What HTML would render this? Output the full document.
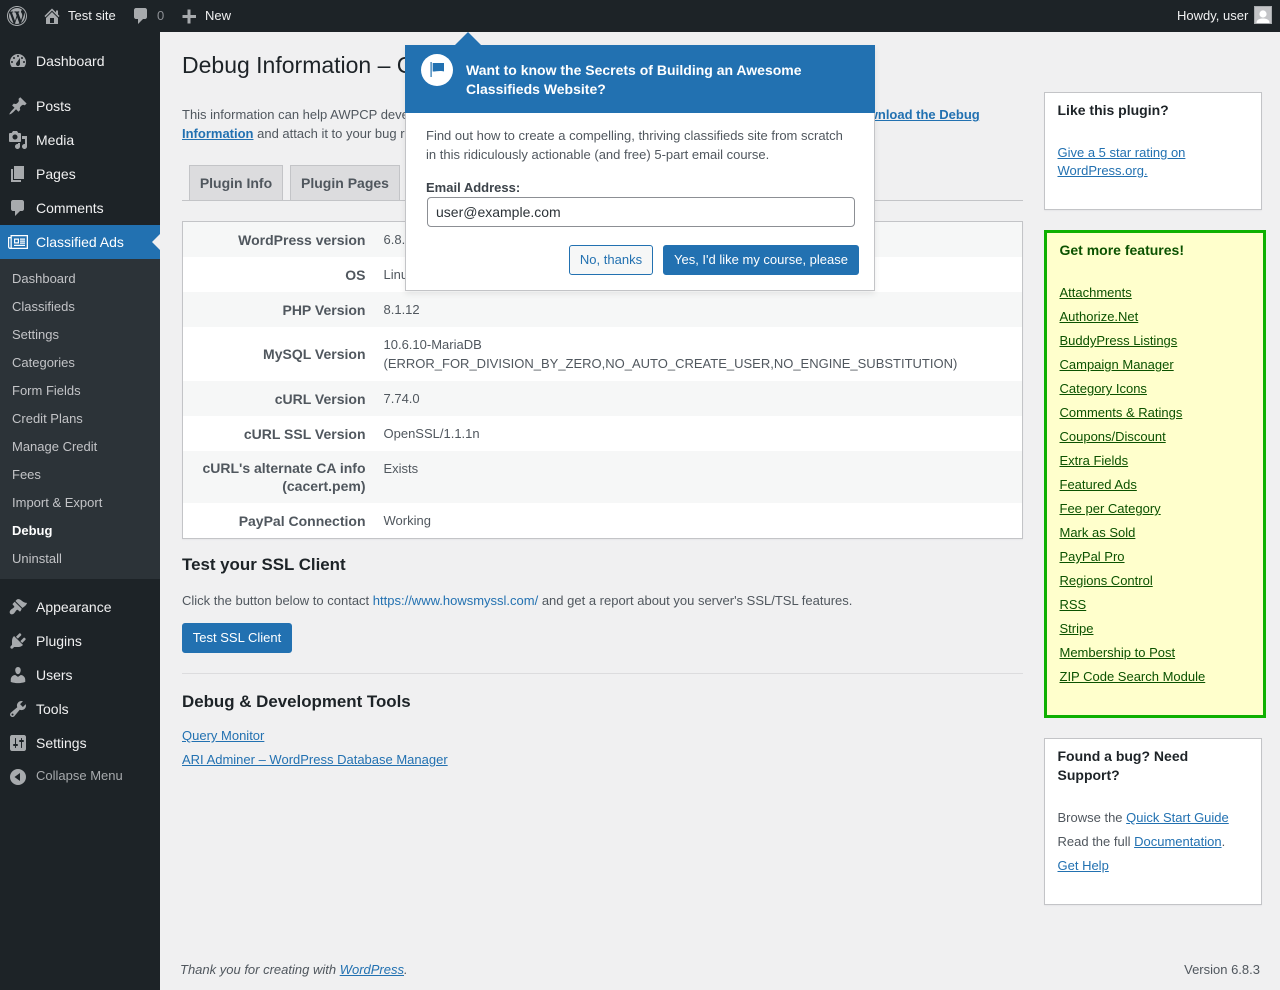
<!DOCTYPE html>
<html lang="en"><head><meta charset="utf-8"><title>Debug Information</title>
<style>
html,body{margin:0;padding:0;width:1280px;height:990px;overflow:hidden;background:#f0f0f1;font-family:"Liberation Sans",sans-serif;font-size:13px;color:#3c434a}
.a{position:absolute;white-space:nowrap}
a{color:#2271b1;text-decoration:underline}
#bar{position:absolute;left:0;top:0;width:1280px;height:32px;background:#1d2327}
#bar .a{line-height:32px;color:#f0f0f1;font-size:13px}
#side{position:absolute;left:0;top:32px;width:160px;height:958px;background:#1d2327}
svg{position:absolute;display:block}
.ic{width:20px;height:20px;fill:#a7aaad;left:8px}
.m{left:36px;font-size:14px;line-height:18px;color:#f0f0f1}
.s{left:12px;font-size:13px;line-height:18px;color:#c3c4c7}
.tr{position:absolute;left:183px;width:839px}
.th{position:absolute;text-align:right;font-size:14px;font-weight:bold;line-height:18px;color:#50575e;white-space:nowrap}
.td{position:absolute;left:383.5px;font-size:13px;line-height:19px;color:#50575e;white-space:nowrap}
.tab{position:absolute;top:165px;height:35px;background:#dcdcde;border:1px solid #c3c4c7;border-bottom:0;box-sizing:border-box;font-size:14px;font-weight:bold;color:#50575e;line-height:35px;text-align:center}
.box{position:absolute;box-sizing:border-box;background:#fff;border:1px solid #c3c4c7;box-shadow:0 1px 1px rgba(0,0,0,.04)}
.g{left:1059.5px;font-size:13px;line-height:18px;color:#0b5200}
.g a{color:#0b5200}
.btn{position:absolute;box-sizing:border-box;border-radius:3px;font-size:13px;text-align:center;height:30px;line-height:28px;border:1px solid #2271b1}
.p{color:#50575e;font-size:13px;line-height:18px}
</style></head><body>

<div id="side"></div>
<div class="a" style="left:0;top:225px;width:160px;height:34px;background:#2271b1"></div>
<div class="a" style="left:0;top:259px;width:160px;height:320px;background:#2c3338"></div>
<div class="a" style="left:152px;top:234px;width:0;height:0;border:8px solid transparent;border-left:0;border-right-color:#f0f0f1"></div>

<div id="bar">
<svg viewBox="0 0 20 20" style="left:7px;top:6px;width:20px;height:20px;fill:#a7aaad"><path d="M20 10c0-5.52-4.48-10-10-10S0 4.48 0 10s4.48 10 10 10 10-4.48 10-10zM10 1.01c4.96 0 8.99 4.03 8.99 8.99s-4.03 8.99-8.99 8.99S1.01 14.96 1.01 10 5.04 1.01 10 1.01zM8.010 14.820L4.960 6.610c.49-.03 1.05-.08 1.05-.08.43-.05.38-1.010-.06-.99 0 0-1.290.1-2.130.1-.15 0-.33 0-.52-.01 1.440-2.170 3.900-3.600 6.700-3.600 2.090 0 3.990.79 5.410 2.090-.6-.08-1.450.35-1.450 1.420 0 .66.38 1.220.79 1.880.31.54.5 1.220.5 2.210 0 1.340-1.270 4.480-1.270 4.480l-2.710-7.500c.48-.03.75-.16.75-.16.43-.05.38-1.100-.05-1.080 0 0-1.300.11-2.140.11-.78 0-2.110-.11-2.110-.11-.43-.02-.48 1.060-.05 1.080l.84.08 1.120 3.040zm6.020 2.150L16.640 10s.67-1.690.39-3.810c.63 1.140.94 2.420.94 3.810 0 2.960-1.560 5.580-3.940 6.970zM2.680 6.770L6.500 17.250c-2.670-1.300-4.470-4.080-4.470-7.250 0-1.160.2-2.230.65-3.230zm7.450 4.530l2.290 6.250c-.75.27-1.570.42-2.420.42-.72 0-1.410-.11-2.060-.3z"/></svg>
<svg viewBox="0 0 20 20" style="left:42px;top:6px;width:20px;height:20px;fill:#a7aaad"><path d="M16 8.500l1.530 1.530-1.060 1.060L10 4.620l-6.470 6.470-1.060-1.060L10 2.500l4 4v-2h2v4zm-6-2.460l6 5.990V18H4v-5.970zM12 17v-5H8v5h4z"/></svg>
<div class="a" style="left:68px;top:0">Test site</div>
<svg viewBox="0 0 20 20" style="left:131px;top:6px;width:20px;height:20px;fill:#a7aaad"><path d="M5 2h9c1.100 0 2 .9 2 2v7c0 1.100-.9 2-2 2h-2l-5 5v-5H5c-1.100 0-2-.9-2-2V4c0-1.100.9-2 2-2z"/></svg>
<div class="a" style="left:157px;top:0;color:#8c8f94">0</div>
<svg viewBox="0 0 20 20" style="left:179px;top:6px;width:20px;height:20px;fill:#a7aaad"><path d="M17 9v3h-5.500v5.500h-3V12H3.500V9h5V3.500h3V9z"/></svg>
<div class="a" style="left:205px;top:0">New</div>
<div class="a" style="left:1177px;top:0">Howdy, user</div>
<div class="a" style="left:1254px;top:6px;width:16px;height:16px;border:1px solid #a7aaad;background:#c3c4c7;overflow:hidden">
<svg viewBox="0 0 16 16" style="left:0;top:0;width:16px;height:16px;fill:#fff"><circle cx="8" cy="7" r="3.600"/><path d="M1.500 16c0-3.500 3-4.500 6.500-4.500s6.500 1 6.500 4.500z"/></svg></div>
</div>

<svg class="ic" viewBox="0 0 20 20" style="top:51px"><path fill-rule="evenodd" d="M3.760 16h12.480c1.100-1.370 1.760-3.110 1.760-5 0-4.420-3.580-8-8-8s-8 3.580-8 8c0 1.890.66 3.630 1.760 5zM10 4c.55 0 1 .45 1 1s-.45 1-1 1-1-.45-1-1 .45-1 1-1zM6 6c.55 0 1 .45 1 1s-.45 1-1 1-1-.45-1-1 .45-1 1-1zm8 0c.55 0 1 .45 1 1s-.45 1-1 1-1-.45-1-1 .45-1 1-1zm-5.370 5.550L12 7v6c0 1.100-.9 2-2 2s-2-.9-2-2c0-.57.24-1.080.63-1.450zM4 10c.55 0 1 .45 1 1s-.45 1-1 1-1-.45-1-1 .45-1 1-1zm12 0c.55 0 1 .45 1 1s-.45 1-1 1-1-.45-1-1 .45-1 1-1z"/></svg>
<div class="a m" style="top:52px">Dashboard</div>
<svg class="ic" viewBox="0 0 20 20" style="top:96px"><path d="M10.440 3.020l1.820-1.820 6.360 6.350-1.830 1.820c-1.050-.68-2.480-.57-3.410.36l-.75.75c-.92.93-1.040 2.350-.35 3.410l-1.830 1.820-2.410-2.410-2.800 2.790c-.42.42-3.380 2.710-3.800 2.290s1.860-3.390 2.280-3.810l2.790-2.790L4.100 9.360l1.830-1.820c1.050.69 2.480.57 3.400-.36l.75-.75c.93-.92 1.050-2.350.36-3.410z"/></svg>
<div class="a m" style="top:97px">Posts</div>
<svg class="ic" viewBox="0 0 20 20" style="top:130px"><path d="M13 11V4c0-.55-.45-1-1-1h-1.670L9 1H5L3.670 3H2c-.55 0-1 .45-1 1v7c0 .55.45 1 1 1h10c.55 0 1-.45 1-1zM7 4.500c1.380 0 2.500 1.120 2.500 2.500S8.380 9.500 7 9.500 4.500 8.380 4.500 7 5.620 4.500 7 4.500zM14 6h5v10.500c0 1.380-1.120 2.500-2.500 2.500S14 17.880 14 16.500s1.120-2.500 2.500-2.500c.17 0 .34.02.5.05V9h-3V6zm-4 8.050V13h2v3.500c0 1.380-1.120 2.500-2.500 2.500S7 17.880 7 16.500 8.120 14 9.500 14c.17 0 .34.02.5.05z"/></svg>
<div class="a m" style="top:131px">Media</div>
<svg class="ic" viewBox="0 0 20 20" style="top:164px"><path d="M6 15V2h10v13H6zm-1 1h8v2H3V5h2v11z"/></svg>
<div class="a m" style="top:165px">Pages</div>
<svg class="ic" viewBox="0 0 20 20" style="top:198px"><path d="M5 2h9c1.100 0 2 .9 2 2v7c0 1.100-.9 2-2 2h-2l-5 5v-5H5c-1.100 0-2-.9-2-2V4c0-1.100.9-2 2-2z"/></svg>
<div class="a m" style="top:199px">Comments</div>
<svg viewBox="0 0 20 14" style="left:8px;top:235px;width:20px;height:14px;fill:#fff"><path fill-rule="evenodd" d="M2.500 0H20V14H2.500C1 14 0 13 0 11.500V2H2.500zM1.200 3.200V11.500c0 .7.4 1.300 1.300 1.300V3.200zM3.800 1.300V12.700H18.700V1.300z"/><path fill-rule="evenodd" d="M6 3.500h5V8.500H6zM7.200 4.700V7.300H9.800V4.700z"/><path d="M12 3.500h5v1.200h-5zM12 5.500h5v1.200h-5zM12 7.500h5v1.200h-5zM6 9.800h11V11H6z"/></svg>
<div class="a m" style="top:233px;color:#fff">Classified Ads</div>

<div class="a s" style="top:270px">Dashboard</div>
<div class="a s" style="top:298px">Classifieds</div>
<div class="a s" style="top:326px">Settings</div>
<div class="a s" style="top:354px">Categories</div>
<div class="a s" style="top:382px">Form Fields</div>
<div class="a s" style="top:410px">Credit Plans</div>
<div class="a s" style="top:438px">Manage Credit</div>
<div class="a s" style="top:466px">Fees</div>
<div class="a s" style="top:494px">Import &amp; Export</div>
<div class="a s" style="top:522px;color:#fff;font-weight:bold">Debug</div>
<div class="a s" style="top:550px">Uninstall</div>

<svg class="ic" viewBox="0 0 20 20" style="top:597px"><path d="M14.480 11.060L7.410 3.990l1.500-1.500c.5-.56 2.300-.47 3.510.32 1.210.8 1.430 1.280 2.910 2.100 1.180.64 2.450 1.260 3.670.85-.1 1.100-.9 2.200-1.800 3.100zm-.71.71L6.700 4.700 4.930 6.470c-.39.39-.39 1.020 0 1.410l1.060 1.060c.39.39.39 1.030 0 1.420-.6.6-1.430 1.110-2.210 1.690-.35.26-.7.53-1.010.84-1.350 1.340-1.380 2.890-.45 3.820.93.93 2.480.9 3.820-.45.31-.31.58-.66.84-1.010.58-.78 1.090-1.610 1.690-2.210.39-.39 1.030-.39 1.420 0l1.060 1.060c.39.39 1.020.39 1.410 0z"/></svg>
<div class="a m" style="top:598px">Appearance</div>
<svg class="ic" viewBox="0 0 20 20" style="top:631px"><path d="M13.110 4.360L9.870 7.600 8 5.730l3.240-3.240c.35-.34 1.050-.2 1.560.32.52.51.66 1.210.31 1.550zm-8 1.770l.91-1.120 9.010 9.010-1.190.84c-.71.71-2.630 1.160-3.820 1.160H6.140L4.900 17.260c-.59.59-1.540.59-2.120 0-.59-.58-.59-1.530 0-2.120l1.240-1.240v-3.880c0-1.130.4-3.190 1.090-3.890zm7.260 3.970l3.240-3.240c.34-.35 1.040-.21 1.550.31.52.51.66 1.210.31 1.550l-3.240 3.250z"/></svg>
<div class="a m" style="top:632px">Plugins</div>
<svg class="ic" viewBox="0 0 20 20" style="top:665px"><path d="M10 9.250c-2.270 0-2.730-3.440-2.730-3.440C7 4.020 7.820 2 9.970 2c2.160 0 2.980 2.020 2.710 3.810 0 0-.41 3.440-2.680 3.440zm0 2.570L12.720 10c2.390 0 4.520 2.330 4.520 4.530v2.490s-3.650 1.130-7.240 1.130c-3.650 0-7.240-1.130-7.240-1.130v-2.490c0-2.250 1.940-4.480 4.470-4.480z"/></svg>
<div class="a m" style="top:666px">Users</div>
<svg class="ic" viewBox="0 0 20 20" style="top:699px"><path d="M16.680 9.770c-1.340 1.340-3.300 1.670-4.950.99l-5.410 6.520c-.99.99-2.590.99-3.580 0s-.99-2.590 0-3.570l6.520-5.420c-.68-1.650-.35-3.610.99-4.950 1.280-1.280 3.120-1.620 4.720-1.060l-2.890 2.890 2.820 2.820 2.860-2.870c.53 1.580.18 3.390-1.080 4.650zM3.810 16.210c.4.39 1.040.39 1.430 0 .4-.4.4-1.040 0-1.430-.39-.4-1.030-.4-1.430 0-.39.39-.39 1.030 0 1.430z"/></svg>
<div class="a m" style="top:700px">Tools</div>
<svg class="ic" viewBox="0 0 20 20" style="top:733px"><path fill-rule="evenodd" d="M18 16V4c0-1.100-.9-2-2-2H4c-1.100 0-2 .9-2 2v12c0 1.100.9 2 2 2h12c1.100 0 2-.9 2-2zM8 11h1c.55 0 1 .45 1 1s-.45 1-1 1H8v1.500c0 .28-.22.5-.5.5s-.5-.22-.5-.5V13H6c-.55 0-1-.45-1-1s.45-1 1-1h1V5.500c0-.28.22-.5.5-.5s.5.22.5.5V11zm5-2h-1c-.55 0-1-.45-1-1s.45-1 1-1h1V5.500c0-.28.22-.5.5-.5s.5.22.5.5V7h1c.55 0 1 .45 1 1s-.45 1-1 1h-1v5.500c0 .28-.22.5-.5.5s-.5-.22-.5-.5V9z"/></svg>
<div class="a m" style="top:734px">Settings</div>
<svg class="ic" viewBox="0 0 20 20" style="top:767px"><path fill-rule="evenodd" d="M10 2a8 8 0 1 0 0 16 8 8 0 0 0 0-16zM12 6v8L6.500 10z"/></svg>
<div class="a" style="left:36px;top:767px;font-size:13px;line-height:18px;color:#a7aaad">Collapse Menu</div>

<div class="a" style="left:182px;top:49px;font-size:23px;line-height:32px;color:#1d2327">Debug Information – Classifieds</div>
<div class="a p" style="left:182px;top:106px">This information can help AWPCP developers to debug possible problems. If you are submitting a bug report please <a href="#" style="font-weight:bold">Download the Debug</a></div>
<div class="a p" style="left:182px;top:125px"><a href="#" style="font-weight:bold">Information</a> and attach it to your bug report.</div>

<div class="a" style="left:182px;top:200px;width:841px;height:1px;background:#c3c4c7"></div>
<div class="tab" style="left:189px;width:94px">Plugin Info</div>
<div class="tab" style="left:290px;width:110px">Plugin Pages</div>

<div class="box" style="left:182px;top:221px;width:841px;height:318px"></div>
<div class="tr" style="top:222px;height:35px;background:#f6f7f7"></div>
<div class="tr" style="top:292px;height:35px;background:#f6f7f7"></div>
<div class="tr" style="top:381px;height:35px;background:#f6f7f7"></div>
<div class="tr" style="top:451px;height:52px;background:#f6f7f7"></div>
<div class="th" style="right:914.5px;top:231px">WordPress version</div><div class="td" style="top:230px">6.8.3</div>
<div class="th" style="right:914.5px;top:266px">OS</div><div class="td" style="top:265px">Linux</div>
<div class="th" style="right:914.5px;top:301px">PHP Version</div><div class="td" style="top:300px">8.1.12</div>
<div class="th" style="right:914.5px;top:345px">MySQL Version</div><div class="td" style="top:335px">10.6.10-MariaDB<br>(ERROR_FOR_DIVISION_BY_ZERO,NO_AUTO_CREATE_USER,NO_ENGINE_SUBSTITUTION)</div>
<div class="th" style="right:914.5px;top:390px">cURL Version</div><div class="td" style="top:389px">7.74.0</div>
<div class="th" style="right:914.5px;top:425px">cURL SSL Version</div><div class="td" style="top:424px">OpenSSL/1.1.1n</div>
<div class="th" style="right:914.5px;top:459px">cURL's alternate CA info<br>(cacert.pem)</div><div class="td" style="top:459px">Exists</div>
<div class="th" style="right:914.5px;top:512px">PayPal Connection</div><div class="td" style="top:511px">Working</div>

<div class="a" style="left:182px;top:554px;font-size:16.9px;font-weight:bold;line-height:22px;color:#1d2327">Test your SSL Client</div>
<div class="a p" style="left:182px;top:592px">Click the button below to contact <a href="#" style="text-decoration:none">https://www.howsmyssl.com/</a> and get a report about you server's SSL/TSL features.</div>
<div class="btn" style="left:182px;top:623px;width:110px;background:#2271b1;color:#fff">Test SSL Client</div>
<div class="a" style="left:182px;top:673px;width:841px;height:1px;background:#dcdcde"></div>
<div class="a" style="left:182px;top:691px;font-size:16.9px;font-weight:bold;line-height:22px;color:#1d2327">Debug &amp; Development Tools</div>
<div class="a p" style="left:182px;top:727px"><a href="#">Query Monitor</a></div>
<div class="a p" style="left:182px;top:751px"><a href="#">ARI Adminer – WordPress Database Manager</a></div>

<div class="box" style="left:1044px;top:92px;width:218px;height:118px"></div>
<div class="a" style="left:1057.5px;top:101px;font-size:14px;font-weight:bold;line-height:18px;color:#1d2327">Like this plugin?</div>
<div class="a p" style="left:1057.5px;top:144px"><a href="#">Give a 5 star rating on<br>WordPress.org.</a></div>

<div class="a" style="left:1044px;top:230px;width:222px;height:488px;box-sizing:border-box;background:#ffc;border:3px solid #0eb000"></div>
<div class="a g" style="top:241px;font-size:14px;font-weight:bold">Get more features!</div>
<div class="a g" style="top:284px"><a href="#">Attachments</a></div>
<div class="a g" style="top:308px"><a href="#">Authorize.Net</a></div>
<div class="a g" style="top:332px"><a href="#">BuddyPress Listings</a></div>
<div class="a g" style="top:356px"><a href="#">Campaign Manager</a></div>
<div class="a g" style="top:380px"><a href="#">Category Icons</a></div>
<div class="a g" style="top:404px"><a href="#">Comments &amp; Ratings</a></div>
<div class="a g" style="top:428px"><a href="#">Coupons/Discount</a></div>
<div class="a g" style="top:452px"><a href="#">Extra Fields</a></div>
<div class="a g" style="top:476px"><a href="#">Featured Ads</a></div>
<div class="a g" style="top:500px"><a href="#">Fee per Category</a></div>
<div class="a g" style="top:524px"><a href="#">Mark as Sold</a></div>
<div class="a g" style="top:548px"><a href="#">PayPal Pro</a></div>
<div class="a g" style="top:572px"><a href="#">Regions Control</a></div>
<div class="a g" style="top:596px"><a href="#">RSS</a></div>
<div class="a g" style="top:620px"><a href="#">Stripe</a></div>
<div class="a g" style="top:644px"><a href="#">Membership to Post</a></div>
<div class="a g" style="top:668px"><a href="#">ZIP Code Search Module</a></div>

<div class="box" style="left:1044px;top:738px;width:218px;height:167px"></div>
<div class="a" style="left:1057.5px;top:747px;font-size:14px;font-weight:bold;line-height:19px;color:#1d2327">Found a bug? Need<br>Support?</div>
<div class="a p" style="left:1057.5px;top:809px">Browse the <a href="#">Quick Start Guide</a></div>
<div class="a p" style="left:1057.5px;top:833px">Read the full <a href="#">Documentation</a>.</div>
<div class="a p" style="left:1057.5px;top:857px"><a href="#">Get Help</a></div>

<div class="a" style="left:180px;top:961px;font-size:13px;line-height:18px;font-style:italic;color:#50575e">Thank you for creating with <a href="#">WordPress</a>.</div>
<div class="a" style="right:20px;top:961px;font-size:13px;line-height:18px;color:#50575e">Version 6.8.3</div>

<div class="a" style="left:405px;top:45px;width:470px;height:246px;box-sizing:border-box;background:#fff;border:1px solid #c3c4c7;box-shadow:0 3px 6px rgba(0,0,0,.08)"></div>
<div class="a" style="left:405px;top:45px;width:470px;height:68px;background:#2271b1"></div>
<div class="a" style="left:455px;top:32px;width:0;height:0;border:13px solid transparent;border-top:0;border-bottom-color:#2271b1"></div>
<div class="a" style="left:421px;top:54px;width:32px;height:32px;border-radius:50%;background:#fff"></div>
<svg viewBox="0 0 20 20" style="left:428px;top:60px;width:20px;height:20px;fill:#2271b1"><path d="M2.500 2h1.200v15H2.500zM4.700 3h11.300v8.500c-3.500-1.200-7.800 0-11.300 0z"/></svg>
<div class="a" style="left:466px;top:61px;font-size:14px;font-weight:bold;line-height:19px;color:#fff">Want to know the Secrets of Building an Awesome<br>Classifieds Website?</div>
<div class="a p" style="left:426px;top:126px;line-height:19px">Find out how to create a compelling, thriving classifieds site from scratch<br>in this ridiculously actionable (and free) 5-part email course.</div>
<div class="a" style="left:426px;top:179px;font-size:13px;font-weight:bold;line-height:18px;color:#3c434a">Email Address:</div>
<div class="a" style="left:427px;top:197px;width:428px;height:30px;box-sizing:border-box;border:1px solid #8c8f94;border-radius:4px;background:#fff;font-size:14px;line-height:28px;padding-left:8px;color:#2c3338">user@example.com</div>
<div class="btn" style="left:569px;top:245px;width:84px;background:#f6f7f7;color:#2271b1">No, thanks</div>
<div class="btn" style="left:663px;top:245px;width:196px;background:#2271b1;color:#fff">Yes, I'd like my course, please</div>

</body></html>
